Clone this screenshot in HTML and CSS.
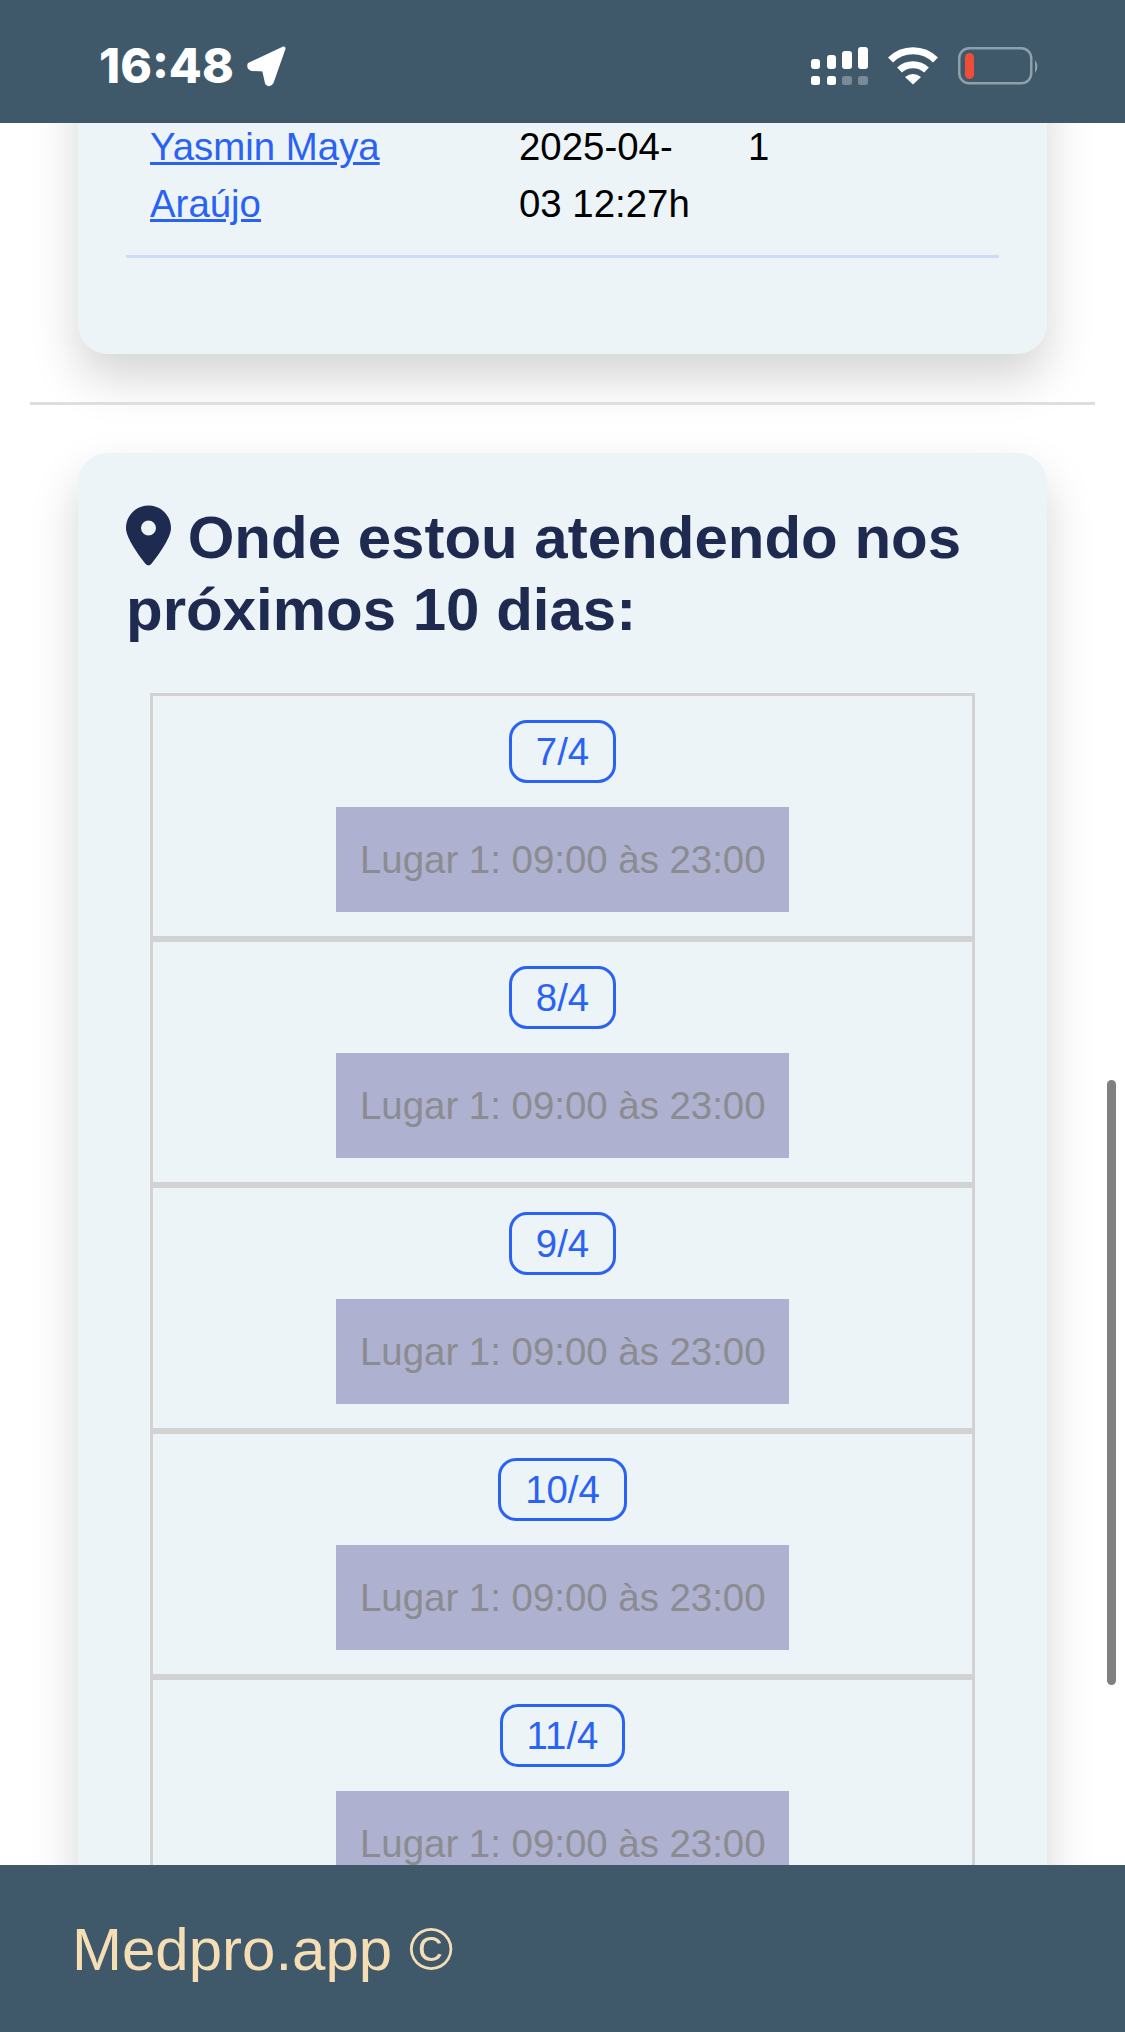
FILE: index.html
```html
<!DOCTYPE html>
<html lang="pt-BR">
<head>
<meta charset="utf-8">
<title>Medpro.app</title>
<link rel="stylesheet" href="styles.css">
</head>
<body>
<div class="screen">
  <header class="status-bar">
    <div class="status-left">
      <span class="clock">16:48</span>
      <svg class="arrow" width="40" height="42" viewBox="0 0 40 42"><path d="M37.500 3.500 L3.500 19.500 Q2.500 23.500 6 24 L18 24.500 L21 38 Q23.500 40.500 25.500 37.500 Z" fill="#fff" stroke="#fff" stroke-width="4" stroke-linejoin="round"/></svg>
    </div>
    <div class="status-right">
      <svg class="signal" width="57" height="39" viewBox="0 0 57 39" fill="#fff">
        <rect x="0" y="12" width="9" height="10" rx="3"/>
        <rect x="16" y="8" width="9" height="14" rx="3"/>
        <rect x="31" y="4" width="10" height="18" rx="3"/>
        <rect x="47" y="0" width="10" height="22" rx="3"/>
        <rect x="0" y="29" width="9" height="9" rx="2.500"/>
        <rect x="16" y="29" width="9" height="9" rx="2.500"/>
        <rect class="signal-off" x="31" y="29" width="10" height="9" rx="2.500"/>
        <rect class="signal-off" x="47" y="29" width="10" height="9" rx="2.500"/>
      </svg>
      <svg class="wifi" width="50" height="38" viewBox="0 0 50 38">
        <path d="M2.500 13 A32 32 0 0 1 47.500 13" fill="none" stroke="#fff" stroke-width="7"/>
        <path d="M11.500 23 A20 20 0 0 1 38.500 23" fill="none" stroke="#fff" stroke-width="7"/>
        <path d="M25 37.500 L17 30 Q25 24 33 30 Z" fill="#fff"/>
      </svg>
      <svg class="battery" width="82" height="38" viewBox="0 0 82 38">
        <rect x="1.250" y="1.250" width="72" height="35" rx="10" fill="none" stroke="#8ea0ab" stroke-width="2.500"/>
        <rect x="7" y="6" width="9" height="26" rx="4.500" fill="#ee4d38"/>
        <path d="M77 13 Q82 19 77 26 Z" fill="#8ea0ab"/>
      </svg>
    </div>
  </header>

  <main class="content">
    <section class="card card-records">
      <div class="record">
        <a class="record-name" href="#">Yasmin Maya Araújo</a>
        <span class="record-date">2025-04-03 12:27h</span>
        <span class="record-count">1</span>
      </div>
      <hr class="record-rule">
    </section>

    <hr class="section-rule">

    <section class="card card-schedule">
      <h2 class="schedule-title">
        <svg class="pin" width="45" height="61" viewBox="0 0 384 512"><path d="M215.700 499.200C267 435 384 279.400 384 192C384 86 298 0 192 0S0 86 0 192c0 87.400 117 243 168.300 307.200c12.300 15.300 35.100 15.300 47.400 0zM192 128a64 64 0 1 1 0 128 64 64 0 1 1 0-128z" fill="#1e2a4f" fill-rule="evenodd"/></svg>
        Onde estou atendendo nos próximos 10 dias:
      </h2>
      <div class="days">
        <div class="day"><span class="day-badge">7/4</span><div class="day-slot">Lugar 1: 09:00 às 23:00</div></div>
        <div class="day"><span class="day-badge">8/4</span><div class="day-slot">Lugar 1: 09:00 às 23:00</div></div>
        <div class="day"><span class="day-badge">9/4</span><div class="day-slot">Lugar 1: 09:00 às 23:00</div></div>
        <div class="day"><span class="day-badge">10/4</span><div class="day-slot">Lugar 1: 09:00 às 23:00</div></div>
        <div class="day"><span class="day-badge">11/4</span><div class="day-slot">Lugar 1: 09:00 às 23:00</div></div>
      </div>
    </section>

    <div class="scroll-thumb"></div>
  </main>

  <footer class="app-footer">Medpro.app ©</footer>
</div>
</body>
</html>
```

FILE: styles.css
```css
* {
  box-sizing: border-box;
}

html,
body {
  margin: 0;
  padding: 0;
  background: #fff;
}

body {
  font-family: "Liberation Sans", Arial, sans-serif;
  font-size: 38.4px;
  line-height: 57px;
  color: #000;
}

.screen {
  display: flex;
  flex-direction: column;
  height: 2032px;
  overflow: hidden;
}

/* Top system bar */
.status-bar {
  flex: none;
  display: flex;
  justify-content: space-between;
  align-items: flex-start;
  height: 123px;
  padding: 47px 85px 0 99px;
  background: #3f596b;
}

.status-left {
  display: flex;
  align-items: center;
  gap: 12px;
  height: 38px;
}

.clock {
  font-family: Inter, "Liberation Sans", sans-serif;
  font-size: 48px;
  font-weight: 800;
  line-height: 38px;
  color: #fff;
}

.status-right {
  display: flex;
  align-items: flex-start;
  gap: 20px;
}

.signal-off {
  opacity: 0.3;
}

/* Scrolling area */
.content {
  position: relative;
  flex: 1;
  min-height: 0;
  overflow: hidden;
}

.card {
  margin: 0 78px;
  padding: 49px 48px 48px;
  background: #ecf4f8;
  border-radius: 30px;
  box-shadow: 0 24px 48px rgba(0, 0, 0, 0.17);
}

/* The list above is scrolled partly under the top bar */
.card-records {
  margin-top: -65px;
  padding: 60px 48px 96px;
}

.record {
  display: grid;
  grid-template-columns: 369px 229px 1fr;
  padding: 0 24px;
}

.record-name {
  padding-right: 60px;
  color: #2962f5;
  text-decoration: underline;
}

.record-date {
  padding-right: 50px;
}

.record-rule {
  height: 3px;
  margin: 23px 0 0;
  border: 0;
  background: #cddcf8;
}

.section-rule {
  height: 3px;
  margin: 48px 30px 48px;
  border: 0;
  background: #dedede;
}

.schedule-title {
  margin: 0 0 47px;
  font-size: 60px;
  font-weight: 700;
  line-height: 72px;
  color: #1e2a4f;
}

.pin {
  vertical-align: -8px;
}

.days {
  margin: 0 24px;
}

.day {
  height: 246px;
  padding: 24px 0;
  border: 3px solid #d2d2d2;
  text-align: center;
}

.day-badge {
  display: inline-block;
  height: 63px;
  padding: 0 24px;
  border: 3px solid #2962f5;
  border-radius: 18px;
  color: #2962f5;
  line-height: 57px;
  vertical-align: top;
}

.day-slot {
  width: 453px;
  height: 105px;
  margin: 24px auto 0;
  padding: 24px;
  background: #aeb1cf;
  color: #8b8c90;
  white-space: nowrap;
}

.scroll-thumb {
  position: absolute;
  top: 957px;
  right: 9px;
  width: 9px;
  height: 605px;
  border-radius: 5px;
  background: #808080;
}

/* Bottom bar */
.app-footer {
  flex: none;
  height: 167px;
  padding: 50px 0 0 72px;
  background: #3f596b;
  color: #f5deb3;
  font-size: 60px;
  line-height: 70px;
}
```
